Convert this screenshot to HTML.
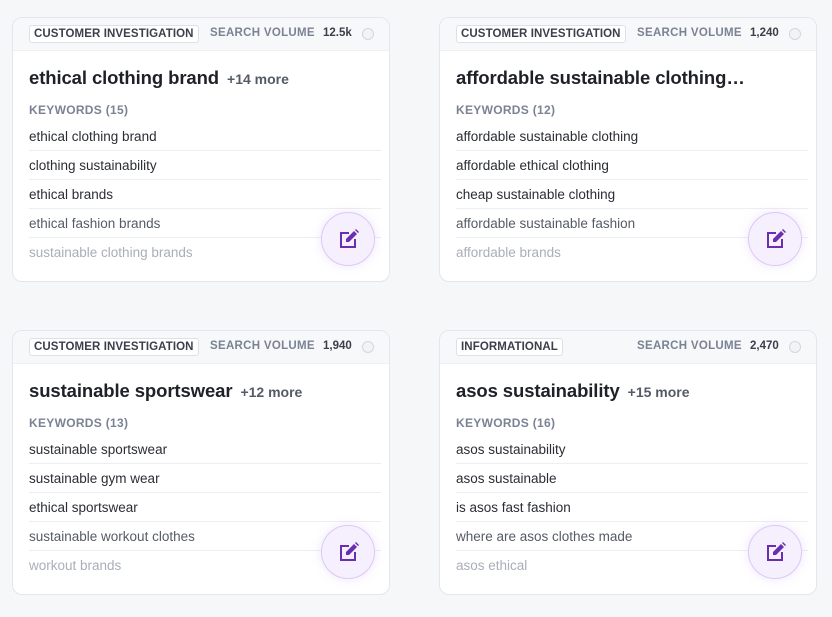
<!DOCTYPE html>
<html><head><style>
*{box-sizing:border-box;margin:0;padding:0}
body{width:832px;height:617px;background:#f6f7f9;font-family:"Liberation Sans",sans-serif;position:relative;overflow:hidden}
.card{position:absolute;width:378px;height:265px;background:#fff;border:1px solid #e3e6ec;border-radius:10px;overflow:hidden}
.hd{position:absolute;left:0;top:0;right:0;height:33px;background:#f7f8fa;border-bottom:1px solid #eef0f3}
.tag{position:absolute;left:16px;top:7px;height:18px;padding:0 4px;border:1px solid #dde1e7;border-radius:3px;background:#fff;font-size:11.5px;font-weight:bold;color:#3a3f4a;line-height:16px;letter-spacing:.1px}
.sv{position:absolute;top:9px;font-size:11.5px;font-weight:bold;color:#7a8294;letter-spacing:.3px}
.num{position:absolute;top:9px;font-size:11.5px;font-weight:bold;color:#3a3f4a}
.dot{position:absolute;right:15px;top:10px;width:12px;height:12px;border-radius:50%;border:1px solid #d3d7de;background:#f1f3f6}
.t{position:absolute;left:16px;top:49px;font-size:18.5px;font-weight:bold;color:#1f2128;white-space:nowrap;letter-spacing:-.1px}
.t span{font-size:14px;color:#555b66;margin-left:8px;letter-spacing:0}
.kw{position:absolute;left:16px;top:85px;font-size:12px;font-weight:bold;color:#7a8294;letter-spacing:.3px}
.rows{position:absolute;left:16px;right:8px;top:104px}
.r{height:29px;line-height:29px;font-size:13.5px;color:#2a2d34;border-bottom:1px solid #eceef2}
.r:last-child{border-bottom:none}
.r.f1{color:#555b66}.r.f2{color:#a9aeb8}
.btn{position:absolute;left:308px;top:194px;width:54px;height:54px;border-radius:50%;background:#f6f0fe;border:1px solid #dcc9f5;box-shadow:0 0 10px rgba(190,150,240,.25)}
.btn svg{position:absolute;left:16px;top:15px}
</style></head><body>

<div class="card" style="left:12px;top:17px">
<div class="hd"><div class="tag">CUSTOMER INVESTIGATION</div><div class="sv" style="left:197px">SEARCH VOLUME</div><div class="num" style="left:310px">12.5k</div><div class="dot"></div></div>
<div class="t">ethical clothing brand<span>+14 more</span></div>
<div class="kw">KEYWORDS (15)</div>
<div class="rows"><div class="r">ethical clothing brand</div><div class="r">clothing sustainability</div><div class="r">ethical brands</div><div class="r f1">ethical fashion brands</div><div class="r f2">sustainable clothing brands</div></div>
<div class="btn"><svg width="22" height="22" viewBox="0 0 22 22"><path d="M2 4h9v2H4v12h12v-7h2v9H2z" fill="#6a2fb0"/><path d="M8 11l8-8 3 3-8 8H8z" fill="#6a2fb0"/><path d="M17 2l1-1 3 3-1 1z" fill="#6a2fb0"/></svg></div>
</div>

<div class="card" style="left:439px;top:17px">
<div class="hd"><div class="tag">CUSTOMER INVESTIGATION</div><div class="sv" style="left:197px">SEARCH VOLUME</div><div class="num" style="left:310px">1,240</div><div class="dot"></div></div>
<div class="t">affordable sustainable clothing…</div>
<div class="kw">KEYWORDS (12)</div>
<div class="rows"><div class="r">affordable sustainable clothing</div><div class="r">affordable ethical clothing</div><div class="r">cheap sustainable clothing</div><div class="r f1">affordable sustainable fashion</div><div class="r f2">affordable brands</div></div>
<div class="btn"><svg width="22" height="22" viewBox="0 0 22 22"><path d="M2 4h9v2H4v12h12v-7h2v9H2z" fill="#6a2fb0"/><path d="M8 11l8-8 3 3-8 8H8z" fill="#6a2fb0"/><path d="M17 2l1-1 3 3-1 1z" fill="#6a2fb0"/></svg></div>
</div>

<div class="card" style="left:12px;top:330px">
<div class="hd"><div class="tag">CUSTOMER INVESTIGATION</div><div class="sv" style="left:197px">SEARCH VOLUME</div><div class="num" style="left:310px">1,940</div><div class="dot"></div></div>
<div class="t">sustainable sportswear<span>+12 more</span></div>
<div class="kw">KEYWORDS (13)</div>
<div class="rows"><div class="r">sustainable sportswear</div><div class="r">sustainable gym wear</div><div class="r">ethical sportswear</div><div class="r f1">sustainable workout clothes</div><div class="r f2">workout brands</div></div>
<div class="btn"><svg width="22" height="22" viewBox="0 0 22 22"><path d="M2 4h9v2H4v12h12v-7h2v9H2z" fill="#6a2fb0"/><path d="M8 11l8-8 3 3-8 8H8z" fill="#6a2fb0"/><path d="M17 2l1-1 3 3-1 1z" fill="#6a2fb0"/></svg></div>
</div>

<div class="card" style="left:439px;top:330px">
<div class="hd"><div class="tag">INFORMATIONAL</div><div class="sv" style="left:197px">SEARCH VOLUME</div><div class="num" style="left:310px">2,470</div><div class="dot"></div></div>
<div class="t">asos sustainability<span>+15 more</span></div>
<div class="kw">KEYWORDS (16)</div>
<div class="rows"><div class="r">asos sustainability</div><div class="r">asos sustainable</div><div class="r">is asos fast fashion</div><div class="r f1">where are asos clothes made</div><div class="r f2">asos ethical</div></div>
<div class="btn"><svg width="22" height="22" viewBox="0 0 22 22"><path d="M2 4h9v2H4v12h12v-7h2v9H2z" fill="#6a2fb0"/><path d="M8 11l8-8 3 3-8 8H8z" fill="#6a2fb0"/><path d="M17 2l1-1 3 3-1 1z" fill="#6a2fb0"/></svg></div>
</div>

</body></html>
